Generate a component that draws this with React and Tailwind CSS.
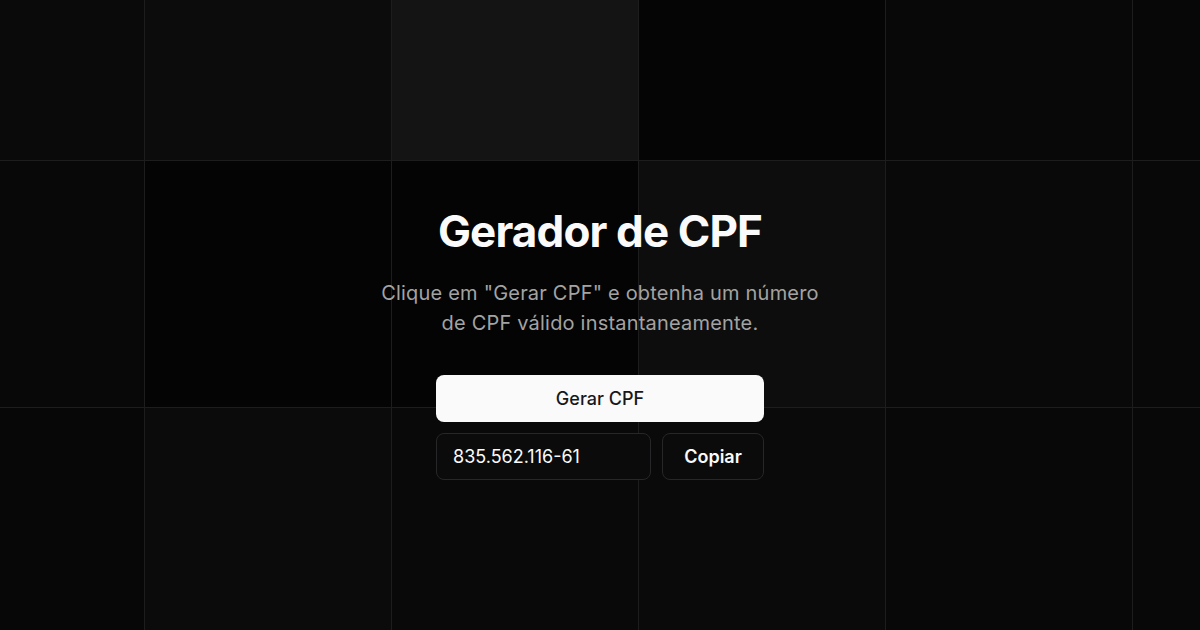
import { useState } from 'react';

// background tiles, row by row (6 columns x 3 rows)
const tiles = [
    'bg-[#0a0a0a]', 'bg-[#0c0c0c]', 'bg-[#141414]', 'bg-[#050505]', 'bg-[#080808]', 'bg-[#070707]',
    'bg-[#080808]', 'bg-[#040404]', 'bg-[#040404]', 'bg-[#0d0d0d]', 'bg-[#090909]', 'bg-[#080808]',
    'bg-[#070707]', 'bg-[#0b0b0b]', 'bg-[#090909]', 'bg-[#0a0a0a]', 'bg-[#080808]', 'bg-[#080808]',
];

const GridBackground = () => (
    <div className="absolute left-[-102px] top-[-86px] grid grid-cols-[repeat(6,247px)] grid-rows-[repeat(3,247px)]">
        {tiles.map((tone, i) => (
            <div key={i} className={`${tone} border-r border-b border-[#1d1d1d]`} />
        ))}
    </div>
);

const App = () => {
    const [cpf] = useState('835.562.116-61');

    return (
        <div className="relative w-full h-[630px] overflow-hidden bg-black font-['Inter',sans-serif]">
            <GridBackground />

            <main className="relative z-10 flex flex-col items-center pt-[209px]">
                <h1 className="text-[44px] leading-none font-bold tracking-[-0.02em] text-[#fafafa]">
                    Gerador de CPF
                </h1>
                <p className="mt-[25px] max-w-[450px] text-center text-[20px] leading-[30px] tracking-[0.01em] text-[#a3a3a3]">
                    Clique em "Gerar CPF" e obtenha um número de CPF válido instantaneamente.
                </p>

                <div className="mt-[37px] w-[328px] flex flex-col gap-[11px]">
                    <button className="h-[47px] w-full rounded-lg bg-[#fafafa] text-[18px] font-medium text-[#18181b]">
                        Gerar CPF
                    </button>
                    <div className="flex gap-[11px]">
                        <input
                            readOnly
                            value={cpf}
                            className="h-[47px] w-[215px] rounded-lg border border-[#27272a] bg-[#0b0b0c] px-4 text-[18px] text-[#fafafa] outline-none"
                        />
                        <button className="h-[47px] flex-1 rounded-lg border border-[#27272a] bg-[#0b0b0c] text-[18px] font-semibold text-[#fafafa]">
                            Copiar
                        </button>
                    </div>
                </div>
            </main>
        </div>
    );
};

export default App;
